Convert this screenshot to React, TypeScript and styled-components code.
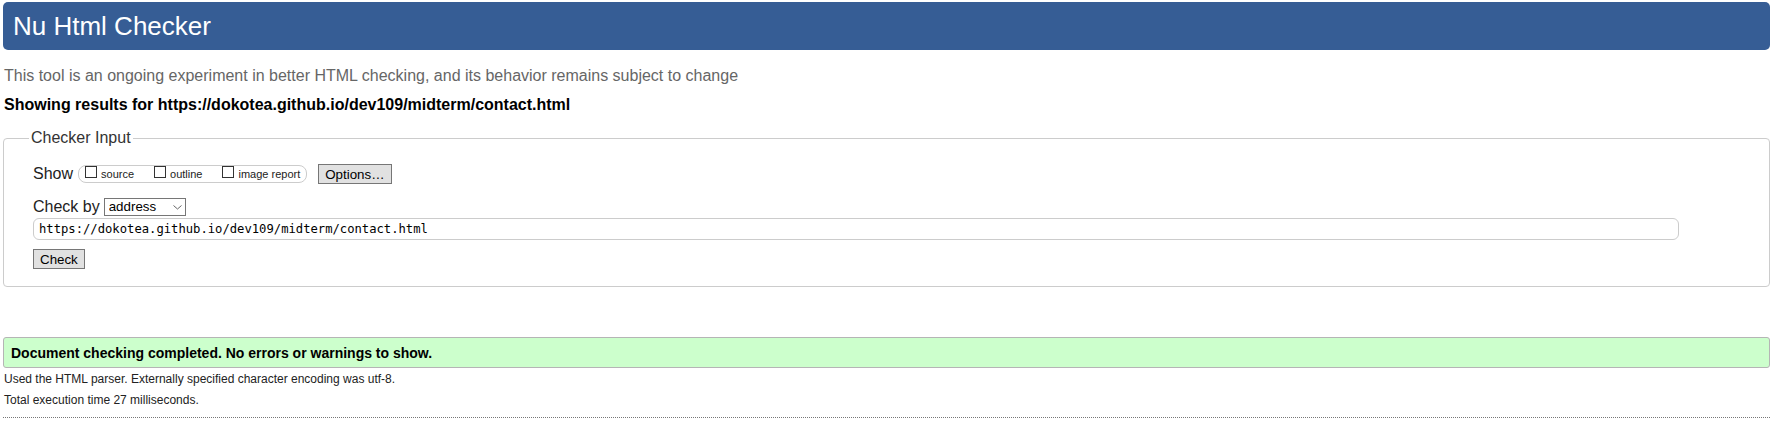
import React from 'react';
import styled, { createGlobalStyle } from 'styled-components';

const GlobalStyle = createGlobalStyle`
  html, body { margin: 0; padding: 0; background: #fff; }
  body { font-family: "Liberation Sans", Arial, sans-serif; color: #000; }
`;

const Page = styled.div`
  padding: 2px 3px 0 3px;
  display: flex;
  flex-direction: column;
`;

const Header = styled.h1`
  margin: 0;
  height: 48px;
  box-sizing: border-box;
  background: #365d95;
  border-radius: 5px;
  color: #fff;
  font-size: 26px;
  font-weight: normal;
  display: flex;
  align-items: center;
  padding-left: 10px;
`;

const Intro = styled.p`
  margin: 17px 0 0;
  padding-left: 1px;
  font-size: 16px;
  line-height: 18px;
  color: #666;
`;

const ResultsFor = styled.h2`
  margin: 11px 0 0;
  padding-left: 1px;
  font-size: 16px;
  line-height: 18px;
  font-weight: bold;
`;

const Fieldset = styled.fieldset`
  margin: 15px 0 0;
  border: 1px solid #ccc;
  border-radius: 4px;
  padding: 0 0 17px 29px;
  min-width: 0;
  display: flex;
  flex-direction: column;
  align-items: flex-start;
`;

const Legend = styled.legend`
  font-size: 16px;
  line-height: 18px;
  color: #333;
  padding: 0 2px;
  margin-left: -4px;
`;

const Row = styled.div<{ $top: number; $h: number }>`
  display: flex;
  align-items: center;
  margin-top: ${(p) => p.$top}px;
  height: ${(p) => p.$h}px;
`;

const FieldLabel = styled.span`
  font-size: 16px;
  color: #222;
`;

const Pill = styled.span`
  display: flex;
  align-items: flex-start;
  height: 18px;
  box-sizing: border-box;
  margin-left: 5px;
  padding: 0 6px;
  border: 1px solid #ccc;
  border-radius: 8px;
`;

const CheckItem = styled.label<{ $last?: boolean }>`
  display: flex;
  align-items: flex-start;
  margin-right: ${(p) => (p.$last ? 0 : 20)}px;
  font-size: 11px;
  color: #222;
`;

const CheckText = styled.span`
  line-height: 12px;
  margin-top: 2px;
`;

const Box = styled.input`
  appearance: none;
  width: 12px;
  height: 12px;
  margin: 0 4px 0 0;
  border: 1px solid #333;
  background: #fff;
  box-sizing: border-box;
`;

const Button = styled.button<{ $ml?: number }>`
  height: 20px;
  box-sizing: border-box;
  margin-left: ${(p) => p.$ml ?? 0}px;
  padding: 0 6px;
  border: 1px solid #767676;
  border-radius: 0;
  background: #e1e1e1;
  font-family: "Liberation Sans", Arial, sans-serif;
  font-size: 13.33px;
  color: #000;
`;

const SelectWrap = styled.span`
  position: relative;
  display: inline-flex;
  margin-left: 4px;
`;

const Select = styled.select`
  appearance: none;
  width: 82px;
  height: 18px;
  box-sizing: border-box;
  border: 1px solid #767676;
  border-radius: 0;
  background: #fff;
  padding: 0 0 0 4px;
  font-family: "Liberation Sans", Arial, sans-serif;
  font-size: 13.33px;
  line-height: 16px;
  color: #000;
`;

const Chevron = styled.svg`
  position: absolute;
  right: 4px;
  top: 7px;
  pointer-events: none;
`;

const UrlInput = styled.input`
  margin-top: 2px;
  width: calc(100% - 90px);
  height: 22px;
  box-sizing: border-box;
  border: 1px solid #ccc;
  border-radius: 6px;
  padding: 0 5px;
  font-family: "DejaVu Sans Mono", "Liberation Mono", monospace;
  font-size: 12.2px;
  color: #000;
  background: #fff;
`;

const CheckButton = styled(Button)`
  margin-top: 9px;
`;

const Success = styled.div`
  margin-top: 50px;
  height: 31px;
  box-sizing: border-box;
  border: 1px solid #b5b5b5;
  border-radius: 3px;
  background: #ccffcc;
  display: flex;
  align-items: center;
  padding-left: 7px;
  font-size: 14px;
  font-weight: bold;
`;

const Note = styled.p<{ $top: number }>`
  margin: ${(p) => p.$top}px 0 0;
  padding-left: 1px;
  font-size: 12px;
  line-height: 14px;
  color: #222;
`;

const Rule = styled.hr`
  margin: 10px 0 0;
  border: 0;
  border-top: 1px dotted #777;
  height: 0;
`;

export default function App() {
  return (
    <>
      <GlobalStyle />
      <Page>
        <Header>Nu Html Checker</Header>
        <Intro>
          This tool is an ongoing experiment in better HTML checking, and its behavior remains subject to change
        </Intro>
        <ResultsFor>Showing results for https://dokotea.github.io/dev109/midterm/contact.html</ResultsFor>
        <Fieldset>
          <Legend>Checker Input</Legend>
          <Row $top={17} $h={20}>
            <FieldLabel>Show</FieldLabel>
            <Pill>
              <CheckItem>
                <Box type="checkbox" />
                <CheckText>source</CheckText>
              </CheckItem>
              <CheckItem>
                <Box type="checkbox" />
                <CheckText>outline</CheckText>
              </CheckItem>
              <CheckItem $last>
                <Box type="checkbox" />
                <CheckText>image report</CheckText>
              </CheckItem>
            </Pill>
            <Button $ml={11}>Options…</Button>
          </Row>
          <Row $top={14} $h={18}>
            <FieldLabel>Check by</FieldLabel>
            <SelectWrap>
              <Select defaultValue="address">
                <option value="address">address</option>
                <option value="file">file upload</option>
                <option value="text">text input</option>
              </Select>
              <Chevron width="9" height="5" viewBox="0 0 9 5">
                <path d="M0.5 0.5 L4.5 4 L8.5 0.5" fill="none" stroke="#666" strokeWidth="1" />
              </Chevron>
            </SelectWrap>
          </Row>
          <UrlInput defaultValue="https://dokotea.github.io/dev109/midterm/contact.html" />
          <CheckButton>Check</CheckButton>
        </Fieldset>
        <Success>Document checking completed. No errors or warnings to show.</Success>
        <Note $top={4}>Used the HTML parser. Externally specified character encoding was utf-8.</Note>
        <Note $top={7}>Total execution time 27 milliseconds.</Note>
        <Rule />
      </Page>
    </>
  );
}
